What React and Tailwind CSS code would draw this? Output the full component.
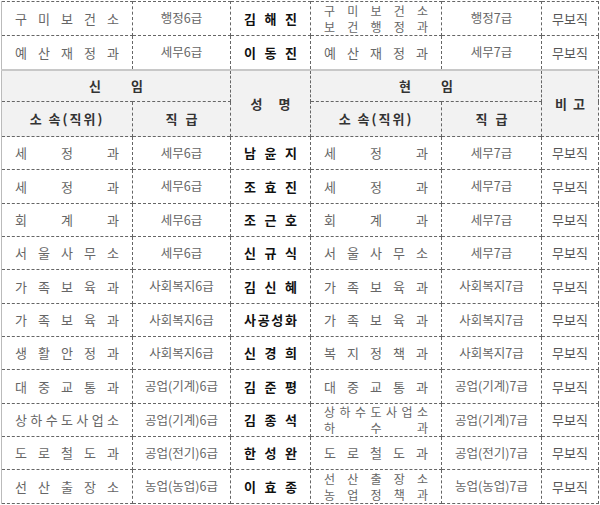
import React from "react";

const KR = { fontFamily: '"Noto Sans CJK KR", "Noto Sans", sans-serif' };

function Dist({ text, className = "" }) {
  const chars = text.replace(/ /g, "").split("");
  return (
    <div className={"flex justify-between px-[13px] " + className}>
      {chars.map((c, i) => (
        <span key={i}>{c}</span>
      ))}
    </div>
  );
}

function Org({ lines }) {
  if (lines.length === 1) {
    return <Dist text={lines[0]} className="text-[13px] text-[#666]" />;
  }
  return (
    <div className="flex flex-col">
      {lines.map((l, i) => (
        <Dist key={i} text={l} className="text-[12px] leading-[16px] text-[#666]" />
      ))}
    </div>
  );
}

const top = [
  [["구미보건소"], "행정6급", "김해진", ["구미보건소", "보건행정과"], "행정7급"],
  [["예산재정과"], "세무6급", "이동진", ["예산재정과"], "세무7급"],
];

const rows = [
  [["세정과"], "세무6급", "남윤지", ["세정과"], "세무7급"],
  [["세정과"], "세무6급", "조효진", ["세정과"], "세무7급"],
  [["회계과"], "세무6급", "조근호", ["회계과"], "세무7급"],
  [["서울사무소"], "세무6급", "신규식", ["서울사무소"], "세무7급"],
  [["가족보육과"], "사회복지6급", "김신혜", ["가족보육과"], "사회복지7급"],
  [["가족보육과"], "사회복지6급", "사공성화", ["가족보육과"], "사회복지7급"],
  [["생활안정과"], "사회복지6급", "신경희", ["복지정책과"], "사회복지7급"],
  [["대중교통과"], "공업(기계)6급", "김준평", ["대중교통과"], "공업(기계)7급"],
  [["상하수도사업소"], "공업(기계)6급", "김종석", ["상하수도사업소", "하수과"], "공업(기계)7급"],
  [["도로철도과"], "공업(전기)6급", "한성완", ["도로철도과"], "공업(전기)7급"],
  [["선산출장소"], "농업(농업)6급", "이효종", ["선산출장소", "농업정책과"], "농업(농업)7급"],
];

const cell = "border border-dashed border-[#666] p-0 align-middle";

function DataRow({ r, h }) {
  return (
    <tr className={h}>
      <td className={cell + " border-l-[#bbb]"} style={{ borderLeftStyle: "solid" }}>
        <Org lines={r[0]} />
      </td>
      <td className={cell + " text-center text-[12.5px] text-[#666]"}>{r[1]}</td>
      <td className={cell}>
        <Dist text={r[2]} className="text-[13px] font-bold text-[#111]" />
      </td>
      <td className={cell}>
        <Org lines={r[3]} />
      </td>
      <td className={cell + " text-center text-[12.5px] text-[#666]"}>{r[4]}</td>
      <td className={cell + " text-center text-[13px] text-[#555]"}>무보직</td>
    </tr>
  );
}

export default function App() {
  return (
    <div className="w-[600px] h-[505px] overflow-hidden bg-white pt-[1px] pl-[1px]" style={KR}>
      <table className="table-fixed border-collapse w-[597px]">
        <colgroup>
          <col className="w-[131px]" />
          <col className="w-[98px]" />
          <col className="w-[80px]" />
          <col className="w-[131px]" />
          <col className="w-[100px]" />
          <col className="w-[57px]" />
        </colgroup>
        <tbody>
          <DataRow r={top[0]} h="h-[34px]" />
          <DataRow r={top[1]} h="h-[34px]" />
          <tr className="h-[32px] bg-[#f2f2f2]">
            <td
              colSpan={2}
              className={cell + " text-center text-[13px] font-bold text-[#333]"}
              style={{ borderTop: "2px solid #c8c8c8", borderLeft: "1px solid #bbb" }}
            >
              <span className="inline-flex gap-[30px]">
                <span>신</span>
                <span>임</span>
              </span>
            </td>
            <td
              rowSpan={2}
              className={cell + " text-center text-[13px] font-bold text-[#333]"}
              style={{ borderTop: "2px solid #c8c8c8" }}
            >
              <span className="inline-flex gap-[16px]">
                <span>성</span>
                <span>명</span>
              </span>
            </td>
            <td
              colSpan={2}
              className={cell + " text-center text-[13px] font-bold text-[#333]"}
              style={{ borderTop: "2px solid #c8c8c8" }}
            >
              <span className="inline-flex gap-[30px]">
                <span>현</span>
                <span>임</span>
              </span>
            </td>
            <td
              rowSpan={2}
              className={cell + " text-center text-[13px] font-bold text-[#333]"}
              style={{ borderTop: "2px solid #c8c8c8" }}
            >
              <span className="inline-flex gap-[6px]">
                <span>비</span>
                <span>고</span>
              </span>
            </td>
          </tr>
          <tr className="h-[35px] bg-[#f2f2f2]">
            <td
              className={cell + " text-center text-[13px] font-bold text-[#333] tracking-[2px]"}
              style={{ borderLeft: "1px solid #bbb" }}
            >
              소 속(직위)
            </td>
            <td className={cell + " text-center text-[13px] font-bold text-[#333]"}>
              <span className="inline-flex gap-[8px]">
                <span>직</span>
                <span>급</span>
              </span>
            </td>
            <td className={cell + " text-center text-[13px] font-bold text-[#333] tracking-[2px]"}>
              소 속(직위)
            </td>
            <td className={cell + " text-center text-[13px] font-bold text-[#333]"}>
              <span className="inline-flex gap-[8px]">
                <span>직</span>
                <span>급</span>
              </span>
            </td>
          </tr>
          {rows.map((r, i) => (
            <DataRow key={i} r={r} h={i % 3 === 1 ? "h-[34px]" : "h-[33px]"} />
          ))}
        </tbody>
      </table>
    </div>
  );
}
